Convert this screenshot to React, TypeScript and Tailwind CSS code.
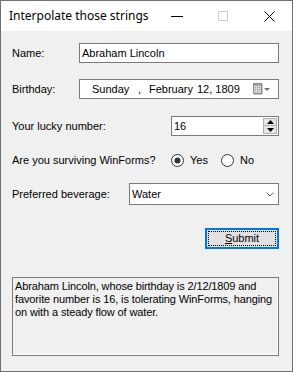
import React from "react";

const F = { fontFamily: '"Liberation Sans", Arial, sans-serif' };

function CalendarIcon() {
  return (
    <svg width="20" height="12" viewBox="0 0 20 12">
      <rect x="1.5" y="0.5" width="8" height="10" fill="#d8d8d8" stroke="#8a8a8a" />
      <rect x="2" y="1" width="7" height="2" fill="#a8a8a8" />
      <g fill="#9a9a9a">
        <rect x="3" y="4" width="1" height="1" />
        <rect x="5" y="4" width="1" height="1" />
        <rect x="7" y="4" width="1" height="1" />
        <rect x="3" y="6" width="1" height="1" />
        <rect x="5" y="6" width="1" height="1" />
        <rect x="7" y="6" width="1" height="1" />
        <rect x="3" y="8" width="1" height="1" />
        <rect x="5" y="8" width="1" height="1" />
        <rect x="7" y="8" width="1" height="1" />
      </g>
      <rect x="2" y="11" width="8" height="1" fill="#c8c8c8" />
      <rect x="10" y="1" width="1" height="10" fill="#c8c8c8" />
      <path d="M12 5 L18 5 L15 8 Z" fill="#4a78b0" />
    </svg>
  );
}

function Radio({ checked }: { checked: boolean }) {
  return (
    <svg width="13" height="13" viewBox="0 0 13 13">
      <circle cx="6.5" cy="6.5" r="6" fill="#fff" stroke="#333" strokeWidth="1" />
      {checked && <circle cx="6.5" cy="6.5" r="3" fill="#333" />}
    </svg>
  );
}

export default function App() {
  return (
    <div
      className="w-[293px] h-[372px] border border-[#707070] bg-[#f0f0f0] flex flex-col text-[11px] text-black overflow-hidden"
      style={F}
    >
      {/* Title bar */}
      <div className="h-[30px] bg-white flex items-center shrink-0">
        <div
          className="pl-[8px] text-[12px] text-[#000] flex-1 leading-none"
          style={{ fontFamily: '"Noto Sans", "Open Sans", sans-serif' }}
        >
          Interpolate those strings
        </div>
        <div className="w-[46px] h-[30px] flex items-center justify-center">
          <div className="w-[12px] h-[1px] bg-black" />
        </div>
        <div className="w-[46px] h-[30px] flex items-center justify-center">
          <div className="w-[10px] h-[10px] border border-[#cccccc]" />
        </div>
        <div className="w-[46px] h-[30px] flex items-center justify-center">
          <svg width="11" height="11" viewBox="0 0 11 11">
            <path d="M0.5 0.5 L10.5 10.5 M10.5 0.5 L0.5 10.5" stroke="#000" strokeWidth="1" />
          </svg>
        </div>
      </div>

      {/* Body */}
      <div className="flex flex-col pl-[11px] pr-[13px]">
        {/* Name */}
        <div className="mt-[12px] h-[20px] flex items-center">
          <div className="w-[67px]">Name:</div>
          <div className="w-[200px] h-[20px] bg-white border border-[#7a7a7a] flex items-center pl-[2px]">
            Abraham Lincoln
          </div>
        </div>

        {/* Birthday */}
        <div className="mt-[16px] h-[20px] flex items-center">
          <div className="w-[67px]">Birthday:</div>
          <div className="w-[200px] h-[20px] bg-white border border-[#7a7a7a] flex items-center relative">
            <span className="absolute left-[12px]">Sunday</span>
            <span className="absolute left-[58px]">,</span>
            <span className="absolute left-[69px]">February</span>
            <span className="absolute left-[117px]">12, 1809</span>
            <span className="absolute left-[172px] top-[3px]">
              <CalendarIcon />
            </span>
          </div>
        </div>

        {/* Lucky number */}
        <div className="mt-[17px] h-[20px] flex items-center">
          <div className="w-[159px]">Your lucky number:</div>
          <div className="w-[108px] h-[20px] bg-white border border-[#7a7a7a] flex items-center pl-[2px] relative">
            <span>16</span>
            <div className="absolute right-[1px] top-[1px] w-[14px] h-[16px] flex flex-col">
              <div className="h-[8px] bg-[#e6e6e6] border border-[#b0b0b0] flex items-center justify-center">
                <svg width="7" height="4" viewBox="0 0 7 4">
                  <path d="M3.5 0 L7 4 L0 4 Z" fill="#000" />
                </svg>
              </div>
              <div className="h-[8px] bg-[#e6e6e6] border border-[#b0b0b0] border-t-0 flex items-center justify-center">
                <svg width="7" height="4" viewBox="0 0 7 4">
                  <path d="M0 0 L7 0 L3.5 4 Z" fill="#000" />
                </svg>
              </div>
            </div>
          </div>
        </div>

        {/* Radio */}
        <div className="mt-[14px] h-[20px] flex items-center">
          <div className="w-[159px]">Are you surviving WinForms?</div>
          <div className="flex items-center">
            <Radio checked />
            <span className="ml-[6px]">Yes</span>
          </div>
          <div className="flex items-center ml-[13px]">
            <Radio checked={false} />
            <span className="ml-[6px]">No</span>
          </div>
        </div>

        {/* Combo */}
        <div className="mt-[13px] h-[22px] flex items-center">
          <div className="w-[117px]">Preferred beverage:</div>
          <div className="w-[150px] h-[22px] bg-white border border-[#7a7a7a] flex items-center pl-[2px] relative">
            <span>Water</span>
            <svg className="absolute right-[4px] top-[8px]" width="8" height="5" viewBox="0 0 8 5">
              <path d="M0.5 0.5 L4 4 L7.5 0.5" stroke="#606060" strokeWidth="1" fill="none" />
            </svg>
          </div>
        </div>

        {/* Submit */}
        <div className="mt-[23px] flex justify-end pr-0">
          <div className="w-[74px] h-[21px] bg-[#e1e1e1] border-2 border-[#0078d7] p-[1px]">
            <div className="w-full h-full border border-dotted border-black flex items-center justify-center">
              <span>
                <span className="underline">S</span>ubmit
              </span>
            </div>
          </div>
        </div>

        {/* Output */}
        <div className="mt-[28px] w-[267px] h-[79px] border border-[#7a7a7a] shadow-[inset_-1px_-1px_0_#ffffff] pl-[2px] pr-[1px] pt-[2px] leading-[13px] tracking-[-0.12px]">
          Abraham Lincoln, whose birthday is 2/12/1809 and favorite number is 16, is tolerating WinForms, hanging on with a steady flow of water.
        </div>
      </div>
    </div>
  );
}
